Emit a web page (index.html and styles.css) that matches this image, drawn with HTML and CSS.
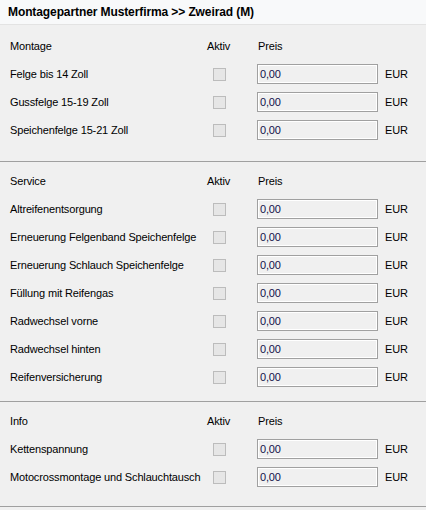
FILE: index.html
```html
<!DOCTYPE html>
<html lang="de">
<head>
<meta charset="utf-8">
<title>Zweirad (M)</title>
<link rel="stylesheet" href="styles.css">
</head>
<body>
<div class="header">Montagepartner Musterfirma &gt;&gt; Zweirad (M)</div>

<div class="section s1">
  <div class="row head"><span>Montage</span><span>Aktiv</span><span class="preis">Preis</span><span></span></div>
  <div class="row"><span>Felge bis 14 Zoll</span><span class="cb"></span><span class="field">0,00</span><span>EUR</span></div>
  <div class="row"><span>Gussfelge 15-19 Zoll</span><span class="cb"></span><span class="field">0,00</span><span>EUR</span></div>
  <div class="row"><span>Speichenfelge 15-21 Zoll</span><span class="cb"></span><span class="field">0,00</span><span>EUR</span></div>
</div>

<div class="section s2">
  <div class="row head"><span>Service</span><span>Aktiv</span><span class="preis">Preis</span><span></span></div>
  <div class="row"><span>Altreifenentsorgung</span><span class="cb"></span><span class="field">0,00</span><span>EUR</span></div>
  <div class="row"><span>Erneuerung Felgenband Speichenfelge</span><span class="cb"></span><span class="field">0,00</span><span>EUR</span></div>
  <div class="row"><span>Erneuerung Schlauch Speichenfelge</span><span class="cb"></span><span class="field">0,00</span><span>EUR</span></div>
  <div class="row"><span>Füllung mit Reifengas</span><span class="cb"></span><span class="field">0,00</span><span>EUR</span></div>
  <div class="row"><span>Radwechsel vorne</span><span class="cb"></span><span class="field">0,00</span><span>EUR</span></div>
  <div class="row"><span>Radwechsel hinten</span><span class="cb"></span><span class="field">0,00</span><span>EUR</span></div>
  <div class="row"><span>Reifenversicherung</span><span class="cb"></span><span class="field">0,00</span><span>EUR</span></div>
</div>

<div class="section s3">
  <div class="row head"><span>Info</span><span>Aktiv</span><span class="preis">Preis</span><span></span></div>
  <div class="row"><span>Kettenspannung</span><span class="cb"></span><span class="field">0,00</span><span>EUR</span></div>
  <div class="row"><span>Motocrossmontage und Schlauchtausch</span><span class="cb"></span><span class="field">0,00</span><span>EUR</span></div>
</div>
</body>
</html>
```

FILE: styles.css
```css
html, body {
  margin: 0;
  padding: 0;
}

body {
  background: #f0f0f0;
  font-family: "Liberation Sans", Arial, sans-serif;
  font-size: 11px;
  letter-spacing: -0.15px;
  color: #000;
  height: 510px;
  overflow: hidden;
}

.header {
  height: 25px;
  box-sizing: border-box;
  padding-left: 8px;
  line-height: 25px;
  font-weight: bold;
  font-size: 12px;
  letter-spacing: -0.1px;
  background: #f8f9fa;
  border-bottom: 1px solid #e3e3e3;
}

.section {
  border-bottom: 1px solid #a0a0a0;
  padding-left: 10px;
}

.s1 { padding-top: 7px; padding-bottom: 17px; }
.s2 { padding-top: 5px; padding-bottom: 10px; }
.s3 { padding-top: 5px; padding-bottom: 15px; }

/* label | Aktiv | Preis | currency */
.row {
  display: grid;
  grid-template-columns: 197px 50px 128px auto;
  align-items: center;
  height: 28px;
}

.head .preis {
  padding-left: 1px;
}

.cb {
  width: 13px;
  height: 13px;
  box-sizing: border-box;
  margin-left: 6px;
  border: 1px solid #bcbcbc;
  background: #e6e6e6;
}

.field {
  width: 121px;
  height: 20px;
  box-sizing: border-box;
  border: 1px solid #a0a0a0;
  box-shadow: inset 0 0 0 1px #fff;
  background: #f0f0f0;
  padding-left: 2px;
  line-height: 18px;
  color: #10104a;
}
```
